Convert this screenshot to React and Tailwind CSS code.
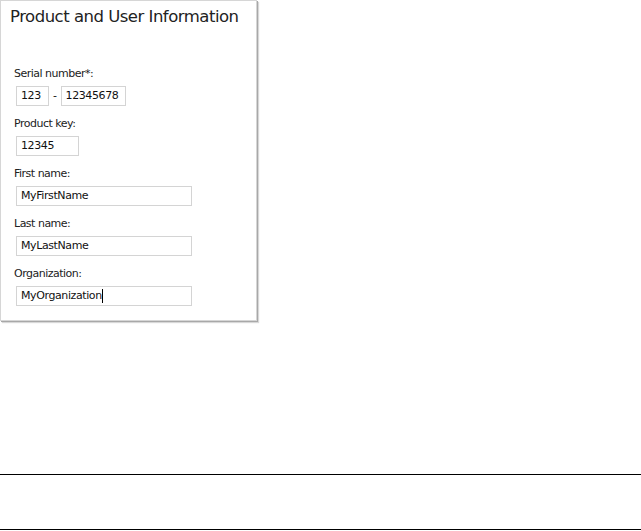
import React from 'react';

const font = { fontFamily: '"DejaVu Sans", Verdana, sans-serif' };

function Field({ label, value, width, caret = false }) {
  return (
    <div className="flex flex-col h-[50px]">
      <div className="h-[14px] leading-[14px] text-[11px] text-[#222] pl-[13px] tracking-[-0.5px]">{label}</div>
      <div
        className={`mt-[5px] ml-[15px] h-[20px] border border-[#d4d4d4] bg-white flex items-center pl-[4px] text-[11px] text-[#111] tracking-[-0.4px] ${width}`}
      >
        <span>{value}</span>
        {caret && <span className="w-px h-[14px] bg-black" />}
      </div>
    </div>
  );
}

export default function App() {
  return (
    <div className="w-[641px] h-[531px] bg-white flex flex-col" style={font}>
      {/* Panel */}
      <div className="w-[257px] h-[321px] border border-[#d6d6d6] bg-white shadow-[1px_1px_0_#a8a8a8,2px_2px_1px_#d8d8d8] flex flex-col">
        <div className="pt-[6px] pl-[9px] h-[66px] text-[16.5px] leading-[20px] text-[#222] tracking-[-0.5px]">
          Product and User Information
        </div>

        <div className="flex flex-col h-[50px]">
          <div className="h-[14px] leading-[14px] text-[11px] text-[#222] pl-[13px] tracking-[-0.5px]">Serial number*:</div>
          <div className="mt-[5px] ml-[15px] flex items-center gap-[4px] text-[11px] text-[#111] tracking-[-0.4px]">
            <div className="h-[20px] w-[33px] border border-[#d4d4d4] flex items-center pl-[4px]">123</div>
            <span>-</span>
            <div className="h-[20px] w-[65px] border border-[#d4d4d4] flex items-center pl-[4px]">12345678</div>
          </div>
        </div>

        <Field label="Product key:" value="12345" width="w-[63px]" />
        <Field label="First name:" value="MyFirstName" width="w-[176px]" />
        <Field label="Last name:" value="MyLastName" width="w-[176px]" />
        <Field label="Organization:" value="MyOrganization" width="w-[176px]" caret />
      </div>

      {/* Bottom bar */}
      <div className="mt-[153px] h-[56px] border-t border-b border-black" />
    </div>
  );
}
